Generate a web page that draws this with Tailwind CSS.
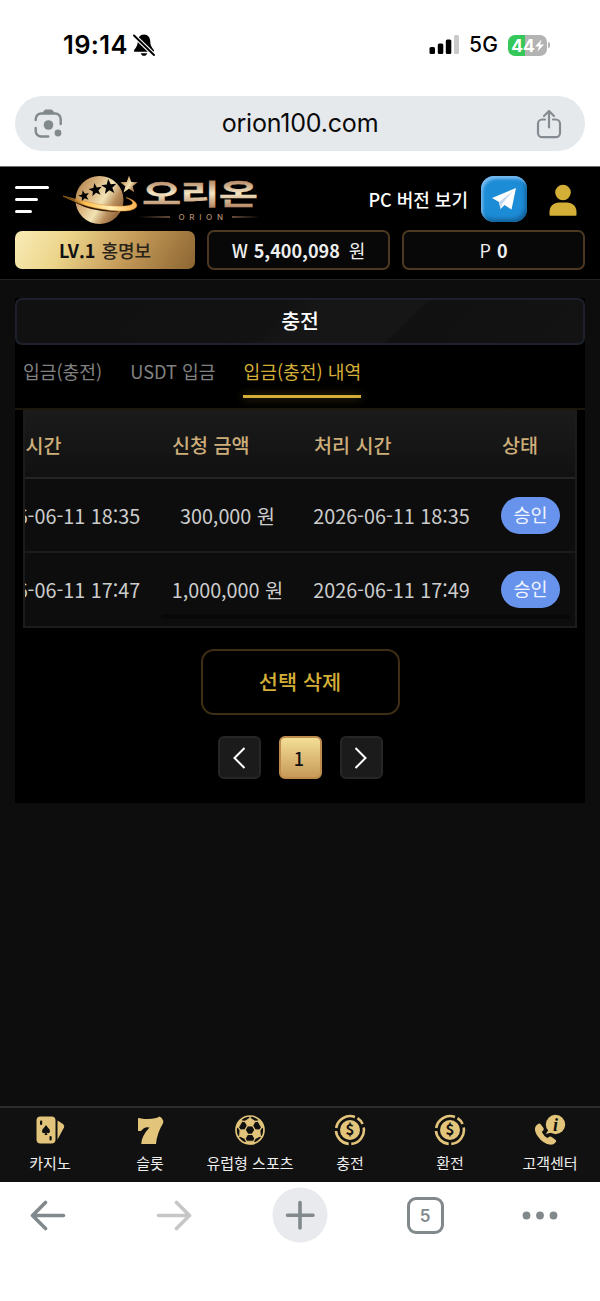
<!DOCTYPE html>
<html lang="ko">
<head>
<meta charset="utf-8">
<title>오리온</title>
<script src="https://cdn.jsdelivr.net/npm/@tailwindcss/browser@4"></script>
</head>
<body class="w-[600px] h-[1301px] overflow-hidden bg-white flex flex-col font-['Noto_Sans_CJK_KR',sans-serif]">

<!-- Status bar -->
<div class="h-[96px] shrink-0 px-[63px] pt-[30px] flex items-start justify-between font-['Inter',sans-serif] text-black">
  <div class="flex items-center h-[30px]">
    <span class="text-[25.5px] leading-[30px] font-semibold tracking-[0.35px]">19:14</span>
    <svg class="ml-[5px] w-[22px] h-[24px]" viewBox="0 0 22 24">
      <path d="M11 1.500c-4 0-6 3-6.200 6.500C4.700 12.500 3 14.500 1.200 17c-.5.9-.2 1.800.8 1.800h18c1 0 1.300-.9.8-1.800C19 14.500 17.300 12.500 17.200 8 17 4.500 15 1.500 11 1.500zM7.800 20.200h6.400c-.4 1.700-1.600 2.600-3.200 2.600s-2.800-.9-3.200-2.600z"/>
      <path d="M1 2.500L21 22" stroke="#fff" stroke-width="4.200"/>
      <path d="M1 2.500L21 22" stroke="#000" stroke-width="1.900" stroke-linecap="round"/>
    </svg>
  </div>
  <div class="flex items-center h-[30px] -mr-[13px]">
    <svg class="w-[30px] h-[20px]" viewBox="0 0 30 20">
      <rect x="0.500" y="12" width="5.500" height="7" rx="1.500"/><rect x="8.800" y="8.500" width="5.500" height="10.500" rx="1.500"/><rect x="16.800" y="4.500" width="5.500" height="14.500" rx="1.500"/><rect x="25" y="0" width="5" height="19" rx="1.500" fill="#c9c9c9"/>
    </svg>
    <span class="ml-[10px] text-[21px] font-medium leading-[30px] tracking-[0.1px]">5G</span>
    <div class="ml-[10px] w-[39px] h-[21px] rounded-[7px] bg-linear-to-r from-[#35c759] from-[44%] to-[#b3b3b3] to-[44%] flex items-center justify-center text-white">
      <span class="text-[17.500px] leading-[21px] font-bold">44</span>
      <svg class="w-[9px] h-[13px] shrink-0" viewBox="0 0 9 12"><path d="M6.500 0L0 7h4L2.500 12 9 5H5z" fill="#fff"/></svg>
    </div>
    <div class="ml-px w-[2px] h-[6px] rounded-r-full bg-[#b3b3b3]"></div>
  </div>
</div>

<!-- Address bar -->
<div class="mx-[15px] h-[55px] shrink-0 rounded-full bg-[#e6e9ec] flex items-center justify-between pl-[19px] pr-[22px]">
  <svg class="w-[29px] h-[29px] -mt-px" viewBox="0 0 29 29" fill="none" stroke="#81898b" stroke-width="2.400" stroke-linecap="round">
    <path d="M1.700 11V10a5.500 5.500 0 0 1 5.500-5.500h14A5.500 5.500 0 0 1 26.700 10v5M1.700 19v3a5.500 5.500 0 0 0 5.500 5.500h7"/>
    <path d="M9 4l1.500-2.400Q11 1 12 1h5q1 0 1.500.6L20 4z" fill="#81898b" stroke-width="1"/>
    <circle cx="14.500" cy="16" r="4.800" fill="#81898b" stroke="none"/><circle cx="24" cy="24" r="3.400" fill="#81898b" stroke="none"/>
  </svg>
  <span class="-mt-px ml-[2px] text-[25px] leading-[30px] text-[#0a0a0a] font-['Inter',sans-serif] tracking-[-0.2px]">orion100.com</span>
  <svg class="w-[28px] h-[30px]" viewBox="0 0 28 30" fill="none" stroke="#858c91" stroke-width="2.200" stroke-linecap="round" stroke-linejoin="round">
    <path d="M10 10.500H7.200A4.200 4.200 0 0 0 3 14.700V24a4.200 4.200 0 0 0 4.200 4.200h13.600A4.200 4.200 0 0 0 25 24v-9.300a4.200 4.200 0 0 0-4.200-4.200H18M14 18.500V2M9 7l5-5 5 5"/>
  </svg>
</div>

<!-- Site header -->
<header class="mt-[15px] h-[114px] shrink-0 bg-black border-t border-t-[#6b7073] border-b border-b-[#232323]">
  <div class="h-[63px] pl-[15px] pr-[23px] flex items-center">
    <div class="flex flex-col gap-[9px] mt-[2px]">
      <div class="w-[34px] h-[3px] rounded-full bg-white"></div>
      <div class="w-[23px] h-[3px] rounded-full bg-white"></div>
      <div class="w-[17px] h-[3px] rounded-full bg-white"></div>
    </div>
    <svg class="ml-[14px] w-[200px] h-[63px]" viewBox="63 167 200 63">
      <defs>
        <linearGradient id="globe" x1="0" y1="0.200" x2="1" y2="0.800"><stop offset="0" stop-color="#b58550"/><stop offset=".3" stop-color="#d8b37e"/><stop offset=".55" stop-color="#f2e3b5"/><stop offset=".75" stop-color="#b98d5b"/><stop offset="1" stop-color="#80572f"/></linearGradient>
        <linearGradient id="word" gradientUnits="userSpaceOnUse" x1="0" y1="-27" x2="0" y2="3"><stop offset=".05" stop-color="#b38561"/><stop offset=".5" stop-color="#f3e6c4"/><stop offset=".95" stop-color="#b98c69"/></linearGradient>
        <linearGradient id="ring" x1="0" x2="1"><stop offset="0" stop-color="#7b4a12" stop-opacity=".4"/><stop offset=".3" stop-color="#ffc04f"/><stop offset=".65" stop-color="#fff1b8"/><stop offset="1" stop-color="#ffb04a"/></linearGradient>
        <linearGradient id="la" x1="0" x2="1"><stop offset="0" stop-color="#7c5a46" stop-opacity="0"/><stop offset="1" stop-color="#7c5a46"/></linearGradient>
        <linearGradient id="lb" x1="1" x2="0"><stop offset="0" stop-color="#7c5a46" stop-opacity="0"/><stop offset="1" stop-color="#7c5a46"/></linearGradient>
        <path id="star" d="M0-10L2.500-3.300 9.500-3.100 4 1.300 5.900 8.100 0 4.100-5.900 8.100-4 1.300-9.500-3.100-2.500-3.300z"/>
      </defs>
      <circle cx="99.500" cy="200" r="24" fill="url(#globe)"/>
      <use href="#star" transform="translate(84 196) rotate(-14) scale(.58)"/>
      <use href="#star" transform="translate(95.500 190) rotate(-10) scale(.7)"/>
      <use href="#star" transform="translate(109 187) rotate(-6) scale(.8)"/>
      <use href="#star" transform="translate(129 185) scale(.92)" fill="url(#globe)"/>
      <path d="M76 201.500C86 207 100 211 118 210" fill="none" stroke="#2a1303" stroke-width="3"/>
      <path d="M63 196C80 200 96 205 114 206 134 207 138 203 126 197.500 142 202 141 212 119 211 96 210 78 204 63 196z" fill="url(#ring)" stroke="#d9862c" stroke-width=".5"/>
      <text transform="translate(142 205) scale(1.450 .97)" font-family="'Noto Sans CJK KR',sans-serif" font-weight="700" font-size="29.500" textLength="80" lengthAdjust="spacing" fill="url(#word)" stroke="url(#word)" stroke-width=".3">오리온</text>
      <rect x="138" y="216.200" width="32" height="1.600" fill="url(#la)"/><rect x="232" y="216.200" width="28" height="1.600" fill="url(#lb)"/>
      <text x="178.500" y="219.700" font-family="'Inter',sans-serif" font-size="8" font-weight="500" letter-spacing="4.700" fill="#b08a70">ORION</text>
    </svg>
    <span class="ml-auto text-[18px] leading-[26px] font-medium text-white whitespace-nowrap">PC 버전 보기</span>
    <div class="ml-[13px] mt-px w-[46px] h-[46px] rounded-[13px] bg-[#1d8cd7] shadow-[inset_2px_3px_3px_#79baee,inset_-2px_-3px_4px_#126096] flex items-center justify-center">
      <svg class="w-[26px] h-[22px]" viewBox="0 0 26 22"><path d="M1 10L25 0 20.500 21.500 13.500 17 9.500 21 8 14z" fill="#fff"/><path d="M8 14L22 3 11 16 9.500 21z" fill="#c5d9ee"/></svg>
    </div>
    <svg class="ml-[22px] w-[28px] h-[32px] mt-[3px]" viewBox="0 0 28 32" fill="#d4af37"><circle cx="14" cy="8.500" r="7.800"/><path d="M.5 31v-3C.5 22 5 18.500 10 18.500h8c5 0 9.500 3.500 9.500 9.500v3q0 .8-.8.800H1.300q-.8 0-.8-.8z"/></svg>
  </div>
  <div class="px-[15px] flex gap-[12px] items-center text-[18px] leading-[26px] text-[#eee]">
    <div class="w-[180px] h-[38px] rounded-[7px] bg-[linear-gradient(120deg,#f7e8b0_5%,#ecd58b_28%,#c49a58_62%,#8b6431_100%)] flex items-center justify-center gap-[6px] text-[#111] -mt-px"><span class="font-bold">LV.1</span><span class="font-medium text-[#29231a]">홍명보</span></div>
    <div class="w-[183px] h-[40px] rounded-[7px] border-2 border-[#4c3820] bg-[#080808] flex items-center justify-center gap-[6px]"><span class="font-medium">W</span><span class="font-bold">5,400,098</span><span class="ml-[3px]">원</span></div>
    <div class="w-[183px] h-[40px] rounded-[7px] border-2 border-[#4c3820] bg-[#080808] flex items-center justify-center gap-[6px]"><span>P</span><span class="font-bold">0</span></div>
  </div>
</header>

<!-- Page -->
<main class="h-[826px] shrink-0 bg-[#0d0d0d] px-[15px] pt-[18px]">
  <section class="h-[505px] bg-black">
    <h1 class="h-[47px] rounded-[7px] border-2 border-[#1c212b] bg-[linear-gradient(135deg,#111_0%,#121212_45%,#161616_50%,#161616_67%,#111_68%,#131313_100%)] flex items-center justify-center text-[20.500px] leading-[28px] pb-[3px] font-medium text-white">충전</h1>
    <nav class="h-[65px] px-[8px] border-b-2 border-[#1b170b] flex gap-[28px] text-[18.200px] leading-[27px] text-[#818181] whitespace-nowrap">
      <span class="pt-[13px]">입금(충전)</span>
      <span class="pt-[13px]">USDT 입금</span>
      <span class="flex flex-col h-[53px] pt-[13px] text-[#d4af37]">입금(충전) 내역<span class="mt-auto h-[3px] bg-[#d4af37] shadow-[0_0_10px_rgba(212,175,55,0.4)]"></span></span>
    </nav>
    <div class="mx-[8px] h-[218px] border-2 border-t-0 border-[#1c1c1c] bg-[#0d0d0d] overflow-hidden">
      <div class="-ml-[58px] w-[610px] text-[19.800px] leading-[28px] text-[#ccc] whitespace-nowrap">
        <div class="h-[69px] grid grid-cols-[189px_141px_188px_92px] items-center border-b-2 border-[#252525] bg-linear-to-b from-[#1b1b1b] to-[#111] text-[19.600px] font-medium text-[#cdae7a]">
          <span class="pl-[17px] pt-[3px]">신청 시간</span><span class="pl-[16px] pt-[3px]">신청 금액</span><span class="pl-[17px] pt-[3px]">처리 시간</span><span class="pl-[17px] pt-[3px]">상태</span>
        </div>
        <div class="h-[74px] grid grid-cols-[188px_142px_187px_93px] items-center justify-items-center border-b-2 border-[#1c1c1c]">
          <span class="pt-px pl-[2px]">2026-06-11 18:35</span><span class="pt-px pl-[3px]">300,000 원</span><span class="pt-px pl-[2px]">2026-06-11 18:35</span>
          <span class="w-[59px] h-[37px] pb-[3px] rounded-full bg-[#6893ec] text-[18.500px] text-[#f1f5ff] flex items-center justify-center">승인</span>
        </div>
        <div class="h-[73px] grid grid-cols-[188px_142px_187px_93px] items-center justify-items-center">
          <span class="pt-px pl-[2px]">2026-06-11 17:47</span><span class="pt-px pl-[3px]">1,000,000 원</span><span class="pt-px pl-[2px]">2026-06-11 17:49</span>
          <span class="w-[59px] h-[37px] pb-[3px] rounded-full bg-[#6893ec] text-[18.500px] text-[#f1f5ff] flex items-center justify-center">승인</span>
        </div>
        <div class="-mt-[12px] ml-[194px] w-[409px] h-[5px] rounded-full bg-[#080808]"></div>
      </div>
    </div>
    <div class="pt-[21px] flex flex-col items-center gap-[21px]">
      <button class="w-[199px] h-[66px] pb-[2px] rounded-[13px] border-2 border-[#3e2e15] text-[20.800px] leading-[28px] font-medium text-[#d4af37]">선택 삭제</button>
      <div class="flex gap-[18px]">
        <div class="w-[43px] h-[43px] rounded-[6px] border-2 border-[#262626] bg-[#1b1b1b] flex items-center justify-center"><svg class="w-[12px] h-[22px]" viewBox="0 0 12 22" fill="none" stroke="#fff" stroke-width="2"><path d="M11.500 1L1.500 11l10 10"/></svg></div>
        <div class="w-[43px] h-[43px] rounded-[6px] border-2 border-[#bd8c4d] bg-linear-to-b from-[#f3df97] to-[#c79a59] flex items-center justify-center text-[18px] leading-[26px] pr-[2px] font-medium text-[#111]">1</div>
        <div class="w-[43px] h-[43px] rounded-[6px] border-2 border-[#262626] bg-[#1b1b1b] flex items-center justify-center"><svg class="w-[12px] h-[22px]" viewBox="0 0 12 22" fill="none" stroke="#fff" stroke-width="2"><path d="M.5 1l10 10-10 10"/></svg></div>
      </div>
    </div>
  </section>
</main>

<!-- Bottom menu -->
<nav class="h-[76px] shrink-0 bg-[#111] border-t-2 border-[#2d2d2d] grid grid-cols-6 text-[15px] leading-[20px] text-[#eee] whitespace-nowrap">
  <div class="flex flex-col items-center pt-[6px] gap-[7px]">
    <svg class="w-[32px] h-[32px]" viewBox="0 0 32 32"><rect x="2.500" y="2.500" width="19" height="27" rx="4" fill="#e2c47b"/><path d="M23.500 6.500l5.500 3.500q2 1.500 1 3.500L23.500 25.500z" fill="#e2c47b"/><path d="M12 11C10 14 8 15 8 17.200c0 2 2.200 2.600 3.400 1.300L10.500 21h3l-.9-2.500c1.200 1.300 3.400.7 3.400-1.300 0-2.200-2-3.200-4-6.200z" fill="#111"/><rect x="6" y="6.500" width="2.200" height="4.500" rx="1" fill="#111"/><rect x="15.500" y="22" width="2.200" height="4.500" rx="1" fill="#111"/></svg>
    <span>카지노</span>
  </div>
  <div class="flex flex-col items-center pt-[6px] gap-[7px]">
    <svg class="w-[32px] h-[32px]" viewBox="0 0 32 32"><path d="M4 4.200q2-.7 3 .3 8 1.200 14-.2Q24 3.500 25.500 2.500q2 .7 3.700 4v2.500Q23 19 22 30H7.200Q7.500 22 15.500 13.500q-5-1.500-8.500 3.500H4z" fill="#e2c47b"/></svg>
    <span>슬롯</span>
  </div>
  <div class="flex flex-col items-center pt-[6px] gap-[7px]">
    <svg class="w-[32px] h-[32px]" viewBox="0 0 32 32" fill="none" stroke="#e2c47b" stroke-width="1.300">
      <defs><g id="panel"><path d="M13.500 11.700h5l2.300-4.200L16 4.200l-4.800 3.300z" fill="#e2c47b"/><path d="M20.800 7.500l3.700-.3M11.200 7.500l-3.700-.3M16 4.200V2"/><path d="M13 27.200h6l2 1.800q-5 2-10 0z" fill="#e2c47b" stroke-width=".8"/></g></defs>
      <circle cx="16" cy="16" r="14" stroke-width="1.700"/>
      <use href="#panel"/><use href="#panel" transform="rotate(120 16 16)"/><use href="#panel" transform="rotate(240 16 16)"/>
      <path d="M21 16l-2.500 4.300h-5L11 16l2.500-4.300h5z"/>
    </svg>
    <span>유럽형 스포츠</span>
  </div>
  <div class="flex flex-col items-center pt-[6px] gap-[7px]">
    <svg class="w-[32px] h-[32px]" viewBox="0 0 32 32"><g fill="none" stroke="#e2c47b" stroke-width="2.600"><path d="M2.200 14A14 14 0 0 1 21 3M23.500 4.200A14 14 0 0 1 28.600 10M29.700 13.500A14 14 0 0 1 17.300 29.900M14.700 29.900A14 14 0 0 1 2 17"/></g><circle cx="16" cy="16" r="10" fill="#e2c47b"/><text x="16" y="21.200" text-anchor="middle" font-family="'Noto Sans CJK KR',sans-serif" font-weight="700" font-size="15" fill="#111">$</text></svg>
    <span>충전</span>
  </div>
  <div class="flex flex-col items-center pt-[6px] gap-[7px]">
    <svg class="w-[32px] h-[32px]" viewBox="0 0 32 32"><g fill="none" stroke="#e2c47b" stroke-width="2.600"><path d="M2.200 14A14 14 0 0 1 21 3M23.500 4.200A14 14 0 0 1 28.600 10M29.700 13.500A14 14 0 0 1 17.300 29.900M14.700 29.900A14 14 0 0 1 2 17"/></g><circle cx="16" cy="16" r="10" fill="#e2c47b"/><text x="16" y="21.200" text-anchor="middle" font-family="'Noto Sans CJK KR',sans-serif" font-weight="700" font-size="15" fill="#111">$</text></svg>
    <span>환전</span>
  </div>
  <div class="flex flex-col items-center pt-[6px] gap-[7px]">
    <svg class="w-[32px] h-[32px]" viewBox="0 0 32 32" fill="#e2c47b"><circle cx="21.500" cy="10.500" r="9.700"/><path d="M15 15l-3.200 5 6-1.500z"/><path d="M4 10q1.500-1 2.500 0l3 4q.8 1.300-.3 2.500L7.800 18q2 4 5.500 6l2-1.300q1.200-.7 2.400.2l4 3q1 1 0 2.300-2 2.600-5 2.600Q9 30 3.500 22 .5 17.500 1 14q.5-2.500 3-4z"/><text x="21.500" y="16.500" text-anchor="middle" font-family="'Liberation Serif',serif" font-weight="700" font-style="italic" font-size="18" fill="#111">i</text></svg>
    <span>고객센터</span>
  </div>
</nav>

<!-- Browser toolbar -->
<div class="flex-1 bg-white grid grid-cols-[96px_156px_96px_154px_76px] items-start pt-[5px] justify-items-center">
  <svg class="w-[36px] h-[56px]" viewBox="0 0 36 56" fill="none" stroke="#81898d" stroke-width="3.600" stroke-linecap="round" stroke-linejoin="round"><path d="M15.500 15.500L2.500 28.500l13 13M3 28.500h30.500"/></svg>
  <svg class="w-[36px] h-[56px]" viewBox="0 0 36 56" fill="none" stroke="#c6c6c6" stroke-width="3.600" stroke-linecap="round" stroke-linejoin="round"><path d="M20.500 15.500l13 13-13 13M2.500 28.500H33"/></svg>
  <svg class="w-[56px] h-[56px]" viewBox="0 0 56 56"><circle cx="28" cy="28" r="27.500" fill="#e8eaee"/><path d="M28 15.500v25.500M15.500 28.200h25.500" stroke="#81898d" stroke-width="3.600" stroke-linecap="round"/></svg>
  <div class="mt-[10px] w-[37px] h-[37px] rounded-[9px] border-[3px] border-[#81898d] flex items-center justify-center font-['Inter',sans-serif] text-[17px] leading-[20px] font-semibold text-[#81898d]">5</div>
  <svg class="w-[36px] h-[56px]" viewBox="0 0 36 56" fill="#81898d"><circle cx="4.500" cy="28.500" r="3.900"/><circle cx="18" cy="28.500" r="3.900"/><circle cx="31.500" cy="28.500" r="3.900"/></svg>
</div>
</body>
</html>
